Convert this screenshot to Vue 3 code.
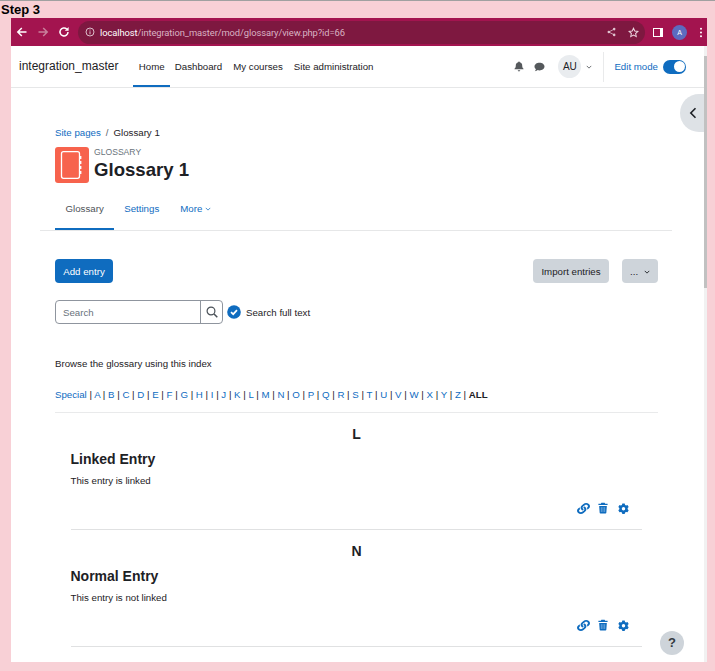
<script setup>
const navItems = ['Home', 'Dashboard', 'My courses', 'Site administration']
const letters = 'ABCDEFGHIJKLMNOPQRSTUVWXYZ'.split('')
const entries = [
  { letter: 'L', title: 'Linked Entry', text: 'This entry is linked' },
  { letter: 'N', title: 'Normal Entry', text: 'This entry is not linked' },
]
const linkPath = 'M326.612 185.391c59.747 59.809 58.927 155.698.36 214.59-.11.12-.24.25-.36.37l-67.2 67.2c-59.27 59.27-155.699 59.262-214.96 0-59.27-59.26-59.27-155.7 0-214.96l37.106-37.106c9.84-9.84 26.786-3.3 27.294 10.606.648 17.722 3.826 35.527 9.69 52.721 1.986 5.822.567 12.262-3.783 16.612l-13.087 13.087c-28.026 28.026-28.905 73.66-1.155 101.96 28.024 28.579 74.086 28.749 102.325.51l67.2-67.19c28.191-28.191 28.073-73.757 0-101.83-3.701-3.694-7.429-6.564-10.341-8.569a16.037 16.037 0 0 1-6.947-12.606c-.396-10.567 3.348-21.456 11.698-29.806l21.054-21.055c5.521-5.521 14.182-6.199 20.584-1.731a152.482 152.482 0 0 1 20.522 17.197zM467.547 44.449c-59.261-59.262-155.69-59.27-214.96 0l-67.2 67.2c-.12.12-.25.25-.36.37-58.566 58.892-59.387 154.781.36 214.59a152.454 152.454 0 0 0 20.521 17.196c6.402 4.468 15.064 3.789 20.584-1.731l21.054-21.055c8.35-8.35 12.094-19.239 11.698-29.806a16.037 16.037 0 0 0-6.947-12.606c-2.912-2.005-6.64-4.875-10.341-8.569-28.073-28.073-28.191-73.639 0-101.83l67.2-67.19c28.239-28.239 74.3-28.069 102.325.51 27.75 28.3 26.872 73.934-1.155 101.96l-13.087 13.087c-4.35 4.35-5.769 10.79-3.783 16.612 5.864 17.194 9.042 34.999 9.69 52.721.509 13.906 17.454 20.446 27.294 10.606l37.106-37.106c59.271-59.259 59.271-155.699.001-214.959z'
</script>

<template>
  <div class="screen">
    <div class="step">Step 3</div>
    <div class="window">
      <div class="toolbar">
        <svg class="tb-icon first" viewBox="0 0 12 12"><path d="M10.5 6H2M5.8 2 1.8 6l4 4" fill="none" stroke="#fff" stroke-width="1.5"/></svg>
        <svg class="tb-icon" viewBox="0 0 12 12"><path d="M1.5 6H10M6.2 2l4 4-4 4" fill="none" stroke="#c9809c" stroke-width="1.5"/></svg>
        <svg class="tb-icon" viewBox="0 0 12 12"><path d="M10 6a4 4 0 1 1-1.2-2.9" fill="none" stroke="#fff" stroke-width="1.5"/><path d="M10.6 1v3.8H6.8z" fill="#fff"/></svg>
        <div class="urlbar">
          <svg class="info" viewBox="0 0 10 10"><circle cx="5" cy="5" r="4" fill="none" stroke="#dcbcc9" stroke-width="1"/><path d="M5 4.3v3M5 2.5v1" stroke="#dcbcc9" stroke-width="1"/></svg>
          <span class="url"><span class="host">localhost</span>/integration_master/mod/glossary/view.php?id=66</span>
          <svg class="share" viewBox="0 0 10 10"><circle cx="8" cy="1.8" r="1.4" fill="#e0c4d0"/><circle cx="8" cy="8.2" r="1.4" fill="#e0c4d0"/><circle cx="2" cy="5" r="1.4" fill="#e0c4d0"/><path d="M8 1.8 2 5l6 3.2" fill="none" stroke="#e0c4d0" stroke-width=".9"/></svg>
          <svg class="star" viewBox="0 0 12 12"><path d="m6 1.3 1.4 3.1 3.4.4-2.5 2.3.7 3.4L6 8.8l-3 1.7.7-3.4-2.5-2.3 3.4-.4z" fill="none" stroke="#ecd6df" stroke-width="1.1"/></svg>
        </div>
        <span class="panel-icon"></span>
        <span class="avatar">A</span>
        <svg class="kebab" viewBox="0 0 4 12"><circle cx="2" cy="2" r="1.1" fill="#fff"/><circle cx="2" cy="6" r="1.1" fill="#fff"/><circle cx="2" cy="10" r="1.1" fill="#fff"/></svg>
      </div>

      <div class="viewport">
        <div class="page">
          <header class="topnav">
            <span class="brand">integration_master</span>
            <nav class="mainnav">
              <a v-for="(item, i) in navItems" :key="item" class="nav-link" :class="{ active: i === 0 }">{{ item }}</a>
            </nav>
            <div class="usernav">
              <svg class="bell" viewBox="0 0 10 11"><path d="M5 .4c.5 0 .8.3.8.8 1.7.4 2.4 1.700 2.400 3.200 0 2 .7 2.700 1.300 3.300v.6H.5v-.6c.6-.6 1.300-1.300 1.300-3.300 0-1.500.7-2.800 2.400-3.200 0-.5.3-.8.8-.8zM3.800 9.300h2.400c0 .7-.5 1.200-1.200 1.200s-1.200-.5-1.200-1.200z" fill="#55595c"/></svg>
              <svg class="chat" viewBox="0 0 11 10"><path d="M5.500.8c2.700 0 5 1.600 5 3.800S8.200 8.400 5.500 8.400c-.7 0-1.300-.1-1.900-.3C3 8.600 2 9.300.8 9.300c.6-.6 1-1.400 1.100-2.100C1 6.500.5 5.600.5 4.600.5 2.400 2.800.8 5.500.8z" fill="#55595c"/></svg>
              <span class="au">AU</span>
              <svg class="chev-user" viewBox="0 0 8 5"><path d="m1 1 3 3 3-3" fill="none" stroke="#3f4448" stroke-width="1"/></svg>
              <span class="divider"></span>
              <span class="editmode">Edit mode</span>
              <span class="switch"><span class="knob"></span></span>
            </div>
          </header>

          <main class="content">
            <div class="crumbs"><a class="link">Site pages</a><span class="sep">/</span><span>Glossary 1</span></div>
            <div class="heading">
              <span class="modicon">
                <svg viewBox="0 0 34 36" width="34" height="36"><path d="M22.500 4.700H8.500a2 2 0 0 0-2 2v22.600a2 2 0 0 0 2 2h14a2 2 0 0 0 2-2V6.700a2 2 0 0 0-2-2z" fill="none" stroke="#fff" stroke-width="1.300"/><path d="M25.300 9v3M25.300 14v3M25.300 19v3M25.300 24v3" stroke="#fff" stroke-width="2.200"/></svg>
              </span>
              <div class="headtext">
                <div class="modtype">GLOSSARY</div>
                <h1>Glossary 1</h1>
              </div>
            </div>
            <div class="tabs">
              <a class="tab active">Glossary</a>
              <a class="tab">Settings</a>
              <a class="tab">More
                <svg class="tab-chev" viewBox="0 0 8 5"><path d="m1 1 3 3 3-3" fill="none" stroke="#0f6cbf" stroke-width="1"/></svg>
              </a>
            </div>

            <div class="actions">
              <button class="btn primary">Add entry</button>
              <div class="actions-right">
                <button class="btn secondary">Import entries</button>
                <button class="btn secondary more">...
                  <svg class="btn-chev" viewBox="0 0 8 5"><path d="m1 1 3 3 3-3" fill="none" stroke="#1d2125" stroke-width="1.200"/></svg>
                </button>
              </div>
            </div>

            <div class="searchrow">
              <div class="search">
                <span class="placeholder">Search</span>
                <span class="searchbtn">
                  <svg viewBox="0 0 12 12" width="12" height="12"><circle cx="5" cy="5" r="3.900" fill="none" stroke="#495057" stroke-width="1.200"/><path d="m8 8 3.300 3.300" stroke="#495057" stroke-width="1.500"/></svg>
                </span>
              </div>
              <span class="check">
                <svg viewBox="0 0 14 14" width="14" height="14"><circle cx="7" cy="7" r="6.800" fill="#0f6cbf"/><path d="m4 7.200 2.200 2L10 5.200" fill="none" stroke="#fff" stroke-width="1.700"/></svg>
              </span>
              <span class="fulltext">Search full text</span>
            </div>

            <p class="browse">Browse the glossary using this index</p>
            <div class="alpha">
              <a class="link">Special</a><span class="bar"> | </span>
              <template v-for="l in letters" :key="l"><a class="link">{{ l }}</a><span class="bar"> | </span></template>
              <b>ALL</b>
            </div>

            <section v-for="e in entries" :key="e.letter" class="group">
              <div class="letter">{{ e.letter }}</div>
              <div class="entry">
                <h3>{{ e.title }}</h3>
                <p>{{ e.text }}</p>
                <div class="entry-icons">
                  <svg class="ic-link" viewBox="0 0 512 512" preserveAspectRatio="none" width="13" height="11"><path :d="linkPath" fill="#0f6cbf"/></svg>
                  <svg class="ic-trash" viewBox="0 0 12 14" width="10" height="12"><path d="M4 .8h4l.6 1.200H11.500v1.500H.5V2h2.900zM1.400 4.500h9.200l-.6 8.200a1 1 0 0 1-1 .9H3a1 1 0 0 1-1-.9z" fill="#0f6cbf"/><path d="M4 6v5.800M6 6v5.800M8 6v5.800" stroke="#8fbde6" stroke-width=".8"/></svg>
                  <svg class="ic-gear" viewBox="0 0 14 14" width="11" height="11"><path fill-rule="evenodd" d="M5.500.6h3l.5 1.800 1.300.7 1.800-.5 1.500 2.600-1.300 1.300v1.500l1.300 1.300-1.500 2.600-1.800-.5-1.300.7-.5 1.800h-3l-.5-1.800-1.300-.7-1.800.5L.4 9.300l1.300-1.300V6.500L.4 5.200l1.500-2.600 1.800.5L5 2.400zM7 5a2.200 2.200 0 1 0 0 4.400A2.200 2.200 0 0 0 7 5z" fill="#0f6cbf"/></svg>
                </div>
              </div>
            </section>
          </main>

          <span class="drawer">
            <svg viewBox="0 0 8 12" width="8" height="12"><path d="M6.500 1.200 1.800 6l4.700 4.800" fill="none" stroke="#1d2125" stroke-width="1.600"/></svg>
          </span>
          <span class="help">?</span>
        </div>
        <div class="scrollbar"><span class="thumb"></span></div>
      </div>
    </div>
  </div>
</template>

<style>
html, body { margin: 0; padding: 0; background: #f8d0d6; }
</style>

<style scoped>
.screen {
  width: 715px;
  height: 671px;
  box-sizing: border-box;
  overflow: hidden;
  background: #f8d0d6;
  border-top: 1px solid #a0a0a0;
  font-family: "Liberation Sans", Arial, sans-serif;
  color: #1d2125;
  font-size: 9.700px;
}
.step { height: 17px; padding-left: 1px; font-size: 13px; font-weight: 700; line-height: 17px; color: #000; }
.window { width: 696px; height: 644px; margin-left: 11px; display: flex; flex-direction: column; }
.toolbar { height: 28px; flex: none; background: #a3144f; display: flex; align-items: center; }
.tb-icon { width: 12px; height: 12px; margin-right: 9px; flex: none; }
.tb-icon.first { margin-left: 5px; }
.urlbar {
  margin-left: -1px;
  width: 567px;
  height: 23px;
  border-radius: 12px;
  background: #7e1840;
  display: flex;
  align-items: center;
  flex: none;
}
.info { width: 10px; height: 10px; margin-left: 7px; flex: none; }
.url { margin-left: 5px; font-family: Roboto, "Liberation Sans", sans-serif; font-size: 9.400px; letter-spacing: -.1px; color: #d9b3c3; white-space: nowrap; flex: 1; }
.host { color: #fff; }
.share { width: 9px; height: 10px; flex: none; margin-right: 12px; }
.star { width: 11px; height: 11px; flex: none; margin-right: 6px; }
.panel-icon { width: 10px; height: 9px; margin-left: 8px; box-sizing: border-box; border-style: solid; border-color: #fff; border-width: 1px 3px 1px 1px; background: #a3144f; flex: none; }
.avatar { width: 15px; height: 15px; margin-left: 9px; border-radius: 50%; background: #5c6bc0; color: #fff; font-size: 7px; text-align: center; line-height: 15px; flex: none; }
.kebab { width: 4px; height: 11px; margin-left: 12px; flex: none; }

.viewport { flex: 1; min-height: 0; display: flex; background: #fff; }
.page { position: relative; width: 693px; flex: none; overflow: hidden; }
.scrollbar { flex: 1; background: #f1f1f1; padding-top: 10px; }
.thumb { display: block; height: 232px; background: #c1c1c1; width: 100%; }

.topnav {
  height: 41px;
  border-bottom: 1px solid #e6e7e8;
  display: flex;
  align-items: stretch;
}
.brand { margin-left: 8px; font-size: 12px; line-height: 41px; width: 112px; color: #1d2125; flex: none; }
.mainnav { display: flex; }
.nav-link { padding: 0 5.500px; line-height: 41px; color: #1d2125; white-space: nowrap; font-size: 9.700px; }
.nav-link.active { margin-left: 2px; padding: 0 5.750px; box-shadow: inset 0 -2px 0 #0f6cbf; margin-right: -1px; }
.usernav { margin-left: auto; display: flex; align-items: center; }
.bell { width: 10px; height: 11px; flex: none; }
.chat { width: 11px; height: 10px; margin-left: 10px; flex: none; }
.au { width: 23px; height: 23px; margin-left: 13px; border-radius: 50%; background: #e9ecef; font-size: 10px; line-height: 23px; text-align: center; flex: none; }
.chev-user { width: 6px; height: 4px; margin-left: 5px; flex: none; }
.divider { width: 1px; height: 30px; background: #e9eaeb; margin-left: 11px; flex: none; }
.editmode { margin-left: 10px; color: #0f6cbf; white-space: nowrap; }
.switch { width: 23px; height: 14px; margin-left: 5px; margin-right: 18px; border-radius: 7px; background: #0f6cbf; display: flex; justify-content: flex-end; align-items: center; padding: 0 1px; box-sizing: border-box; flex: none; }
.knob { width: 11px; height: 11px; border-radius: 50%; background: #fff; }

.content { padding: 38px 29px 0 44px; }
.link { color: #0f6cbf; }
.crumbs { height: 14px; line-height: 14px; font-size: 9.700px; display: flex; }
.sep { margin: 0 5px; color: #5a6268; }
.heading { margin-top: 7px; height: 36px; display: flex; align-items: flex-start; }
.modicon { width: 34px; height: 36px; border-radius: 3px; background: #f7634d; flex: none; display: flex; justify-content: center; }
.headtext { margin-left: 5px; }
.modtype { font-size: 8.600px; line-height: 11px; color: #6a737b; }
h1 { margin: 0; font-size: 18.600px; line-height: 23px; font-weight: 700; }
.tabs { margin: 8px 0 0 -15px; padding-left: 15px; height: 39px; box-sizing: content-box; border-bottom: 1px solid #e6e7e8; display: flex; width: 617px; }
.tab { padding: 0 10px; line-height: 35px; color: #0f6cbf; font-size: 9.700px; white-space: nowrap; }
.tab.active { color: #4e5357; box-shadow: inset 0 -2px 0 #0f6cbf; height: 39px; padding: 0 10.500px; }
.tab:nth-child(3) { padding-left: 11px; }
.tab-chev { width: 6px; height: 4px; vertical-align: 1px; }
.actions { margin-top: 28px; display: flex; justify-content: space-between; align-items: center; width: 603px; }
.actions-right { display: flex; gap: 13px; }
.btn { height: 24px; border: 0; border-radius: 4px; font-family: inherit; font-size: 9.700px; padding: 0; white-space: nowrap; color: #1d2125; }
.primary { width: 58px; background: #0f6cbf; color: #fff; }
.secondary { width: 76px; background: #ced4da; }
.more { width: 36px; color: #1d2125; }
.btn-chev { width: 6px; height: 4px; margin-left: 3px; vertical-align: 1px; }
.searchrow { margin-top: 17px; display: flex; align-items: center; height: 24px; }
.search { width: 168px; height: 24px; box-sizing: border-box; border: 1px solid #8f959e; border-radius: 4px; display: flex; justify-content: space-between; align-items: center; flex: none; }
.placeholder { padding-left: 7px; color: #6a737b; font-size: 9.700px; }
.searchbtn { width: 21px; height: 22px; border-left: 1px solid #8f959e; display: flex; align-items: center; justify-content: center; }
.check { margin-left: 4px; width: 14px; height: 14px; display: flex; flex: none; }
.fulltext { margin-left: 5px; font-size: 9.700px; }
.browse { margin: 33px 0 0; line-height: 14px; height: 14px; font-size: 9.700px; }
.alpha { margin-top: 17px; height: 24px; line-height: 14px; font-size: 9.700px; white-space: nowrap; border-bottom: 1px solid #e9eaeb; width: 603px; }
.bar { color: #1d2125; }
.alpha b { font-weight: 700; }
.group { width: 603px; }
.letter { margin-top: 12px; height: 20px; line-height: 18px; font-size: 14px; font-weight: 700; text-align: center; }
.entry { margin: 5px 16px 0 15.500px; height: 79px; border-bottom: 1px solid #e0e1e2; }
.entry h3 { margin: 0; padding-top: 1px; font-size: 14px; line-height: 17px; font-weight: 700; }
.entry p { margin: 6px 0 0; font-size: 9.700px; line-height: 13px; }
.entry-icons { margin-top: 14px; display: flex; align-items: center; justify-content: flex-end; padding-right: 13px; height: 14px; }
.ic-trash { margin-left: 8px; }
.ic-gear { margin-left: 10px; }
.drawer { position: absolute; right: -1px; top: 48px; width: 25px; height: 38px; border-radius: 19px 0 0 19px; background: #dee2e6; display: flex; align-items: center; padding-left: 9px; box-sizing: border-box; }
.help { position: absolute; left: 649px; top: 585px; width: 24px; height: 24px; border-radius: 50%; background: #ced4da; text-align: center; line-height: 24px; font-size: 13px; font-weight: 700; color: #343a40; }
</style>
